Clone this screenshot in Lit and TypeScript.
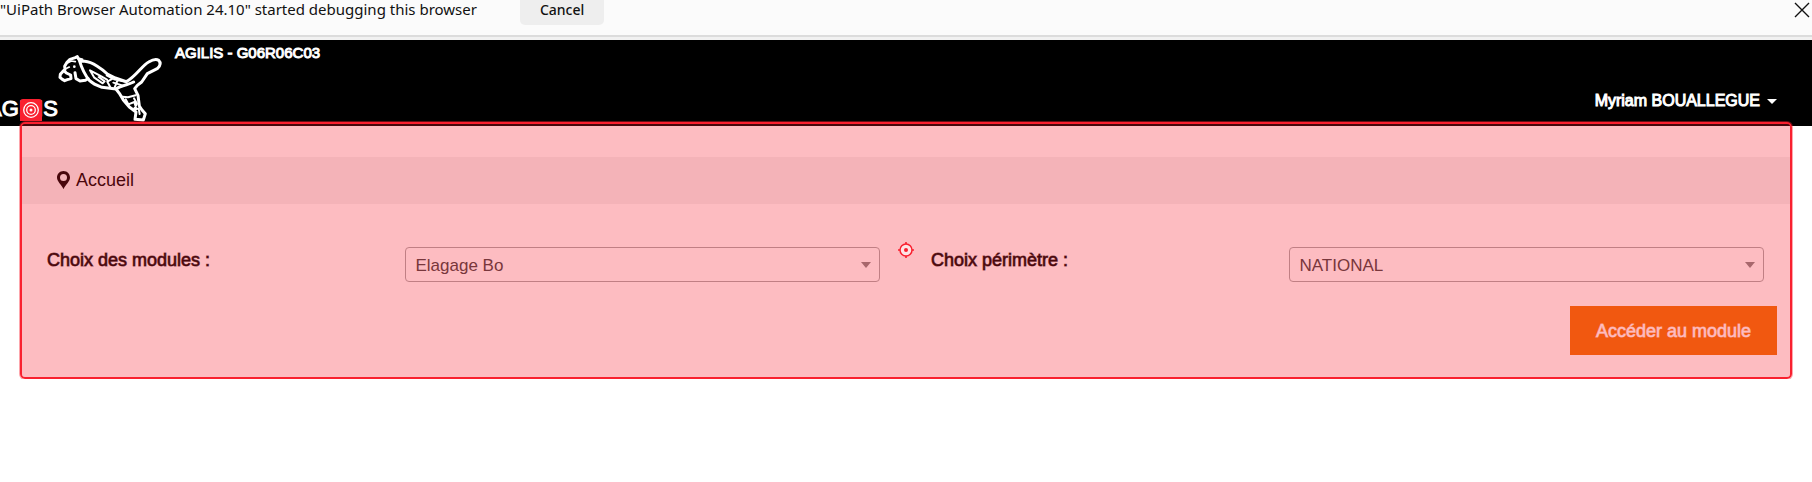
import { LitElement, html, css, svg } from "lit";
import { customElement, property } from "lit/decorators.js";

/** White line drawing of a leaping puma. */
const puma = svg`
  <g fill="none" stroke="#fff" stroke-width="9" stroke-linejoin="round" stroke-linecap="round">
    <path d="M96 44 L86 42 L82 35 L76 38 L60 43 L51 52 L44 64 L45 73 L38 80 L31 88 L30 97 L37 103 L44 107 L52 104 L63 101 L62 90 L49 84 L42 77" />
    <path d="M75 83 L78 101 L90 108 L106 106 L114 101" />
    <path d="M87 43 C94 66 104 90 119 107 C128 116 142 122 156 127 L198 132 L208 145 L220 165 L238 186 L258 201 L255 223 L280 225 L286 206 L276 195 L268 183 L264 151 L254 131 L262 121 L275 111 L292 86 L323 70 Q336 56 326 46 Q316 39 296 51 C276 62 257 95 229 110 L196 99 L172 87 C158 73 128 51 104 49 L92 48" />
    <path d="M198 132 C214 121 236 119 251 111" />
    <path stroke-width="6" d="M171 104 L150 92 L120 76 L133 98 L158 115 L164 109 L146 96 M170 91 L188 101 L172 110 L181 127 M190 113 L219 122 M203 105 L194 127 M192 103 L229 111" />
    <path stroke-width="6" d="M217 155 L234 157 L257 151 M227 163 L235 178 L253 171 L258 188 M252 160 L261 176 L250 196 L266 190 L269 207" />
    <path stroke-width="5" d="M52 54 L64 48 L76 50 M50 70 L58 66" />
  </g>
  <circle cx="73" cy="65" r="4" fill="#fff" />
`;

@customElement("debug-bar")
class DebugBar extends LitElement {
  static styles = css`
    :host {
      display: block;
      background: #fbfbfb;
      border-bottom: 2px solid #dcdcdc;
      font-family: "Noto Sans", "Open Sans", sans-serif;
      font-size: 15px;
      line-height: 19px;
      color: #111;
    }
    .bar {
      display: flex;
      align-items: flex-start;
      height: 35px;
    }
    .message {
      white-space: nowrap;
    }
    .cancel {
      margin-left: 43px;
      padding: 0 20px 6px;
      border: 0;
      border-radius: 0 0 5px 5px;
      background: #eee;
      color: #111;
      font: inherit;
      font-weight: 500;
      font-size: 14px;
      line-height: 19px;
    }
    .close {
      display: block;
      margin-left: auto;
      padding: 2px 2px 0 0;
      border: 0;
      background: none;
    }
    .close svg {
      display: block;
    }
  `;
  render() {
    return html`<div class="bar">
      <span class="message">"UiPath Browser Automation 24.10" started debugging this browser</span>
      <button class="cancel">Cancel</button>
      <button class="close" aria-label="Close">
        <svg width="16" height="16" viewBox="0 0 16 16" stroke="#111" stroke-width="1.400" fill="none">
          <path d="M1 1 L15 15 M15 1 L1 15" />
        </svg>
      </button>
    </div>`;
  }
}

@customElement("site-header")
class SiteHeader extends LitElement {
  static styles = css`
    :host {
      display: flex;
      align-items: flex-start;
      height: 86px;
      background: #000;
      color: #fff;
      -webkit-text-stroke: 1px currentColor;
    }
    .brand {
      margin: 56px 0 0 -13px;
      width: 71px;
      font-size: 22px;
      line-height: 26px;
      white-space: nowrap;
    }
    .logo {
      display: block;
      margin: 5px 0 0 -8px;
    }
    .title {
      margin: 4px 0 0 5px;
      font-size: 15px;
      line-height: 18px;
    }
    .user {
      display: flex;
      align-items: center;
      gap: 7px;
      margin: 50px 35px 0 auto;
      padding: 0;
      border: 0;
      background: none;
      color: inherit;
      font: inherit;
      font-size: 16px;
      line-height: 22px;
    }
  `;
  render() {
    return html`
      <div class="brand">AGILIS</div>
      <svg class="logo" width="120" height="82" viewBox="0 0 360 246" aria-hidden="true">${puma}</svg>
      <div class="title">AGILIS - G06R06C03</div>
      <button class="user">
        Myriam BOUALLEGUE
        <svg width="10" height="5" viewBox="0 0 10 5"><path d="M0 0H10L5 5Z" fill="#fff" /></svg>
      </button>
    `;
  }
}

@customElement("choice-field")
class ChoiceField extends LitElement {
  @property() label = "";
  @property() value = "";
  static styles = css`
    :host {
      display: grid;
      grid-template-columns: 5fr 7fr;
      align-items: start;
      font-size: 17px;
    }
    .label {
      padding-top: 2px;
      font-size: 18px;
      line-height: 22px;
      -webkit-text-stroke: 1px rgba(0, 0, 0, 0.7);
    }
    .box {
      display: grid;
      align-items: center;
      margin-right: 25px;
    }
    .select,
    .arrow {
      grid-area: 1 / 1;
    }
    .select {
      appearance: none;
      width: 100%;
      height: 35px;
      padding: 2px 30px 0 10px;
      border: 1px solid #aaa;
      border-radius: 4px;
      background: #fff;
      color: #444;
      font: inherit;
    }
    .arrow {
      justify-self: end;
      margin-right: 9px;
      pointer-events: none;
    }
  `;
  render() {
    return html`
      <label class="label" for="choice">${this.label}</label>
      <div class="box">
        <select class="select" id="choice"><option>${this.value}</option></select>
        <svg class="arrow" width="10" height="6" viewBox="0 0 10 6"><path d="M0 0H10L5 6Z" fill="#888" /></svg>
      </div>
    `;
  }
}

@customElement("app-root")
class AppRoot extends LitElement {
  static styles = css`
    :host {
      display: block;
      overflow: hidden;
      background: #fff;
      font-family: "Liberation Sans", Arial, sans-serif;
    }
    .strip {
      height: 3px;
      background: #f1f1f1;
    }
    .page {
      position: relative;
      margin: 0 20px;
      padding: 31px 0 24px;
    }
    .crumbs {
      display: flex;
      align-items: center;
      gap: 6px;
      padding: 12px 37px 13px;
      background: #f2f2f2;
      font-size: 18px;
      line-height: 22px;
    }
    .crumb {
      color: #000;
      text-decoration: none;
    }
    .fields {
      display: grid;
      grid-template-columns: 1fr 1fr;
      gap: 26px;
      padding: 43px 3px 0 27px;
    }
    .actions {
      display: flex;
      justify-content: flex-end;
      padding: 24px 15px 0 0;
    }
    .submit {
      padding: 14px 26px 13px;
      border: 0;
      background: #ef7207;
      color: #fff;
      font: inherit;
      font-size: 18px;
      line-height: 22px;
      -webkit-text-stroke: 1px rgba(255, 255, 255, 0.7);
    }
    .highlight {
      position: absolute;
      inset: -4px 0 0;
      border: 2px solid #f9202f;
      border-radius: 5px;
      box-shadow: 0 0 0 1px rgba(249, 32, 47, 0.4);
      background: rgba(248, 24, 40, 0.29);
      background-clip: padding-box;
      pointer-events: none;
    }
    .badge {
      position: absolute;
      top: -27px;
      left: 0;
      display: block;
      border-radius: 3px 3px 0 0;
      background: #f9202f;
    }
    .anchor {
      position: absolute;
      top: 115px;
      left: 50%;
      display: block;
      margin-left: -9px;
    }
  `;
  render() {
    return html`
      <debug-bar></debug-bar>
      <div class="strip"></div>
      <site-header></site-header>
      <main class="page">
        <nav class="crumbs">
          <svg width="13" height="18" viewBox="0 0 13 18">
            <path fill-rule="evenodd" d="M6.500 0C2.900 0 0 2.900 0 6.500C0 10.500 4 13 6.500 18C9 13 13 10.500 13 6.500C13 2.900 10.100 0 6.500 0ZM6.500 3A3.500 3.500 0 1 1 6.500 10A3.500 3.500 0 1 1 6.500 3Z" />
          </svg>
          <a class="crumb" href="#">Accueil</a>
        </nav>
        <div class="fields">
          <choice-field label="Choix des modules :" value="Elagage Bo"></choice-field>
          <choice-field label="Choix périmètre :" value="NATIONAL"></choice-field>
        </div>
        <div class="actions"><button class="submit">Accéder au module</button></div>
        <div class="highlight"></div>
        <svg class="badge" width="22" height="22" viewBox="0 0 22 22" fill="none" stroke="#fff">
          <circle cx="11" cy="11" r="7.300" stroke-width="1.300" />
          <circle cx="11" cy="11" r="4.300" stroke-width="1.300" />
          <circle cx="11" cy="11" r="1.500" fill="#fff" stroke="none" />
        </svg>
        <svg class="anchor" width="18" height="18" viewBox="0 0 18 18">
          <circle cx="9" cy="9" r="6" fill="#fde3e5" stroke="#f9202f" stroke-width="1.500" />
          <circle cx="9" cy="9" r="2" fill="#f9202f" />
          <path d="M9 1V3M9 15V17M1 9H3M15 9H17" stroke="#f9202f" stroke-width="1.600" />
        </svg>
      </main>
    `;
  }
}
